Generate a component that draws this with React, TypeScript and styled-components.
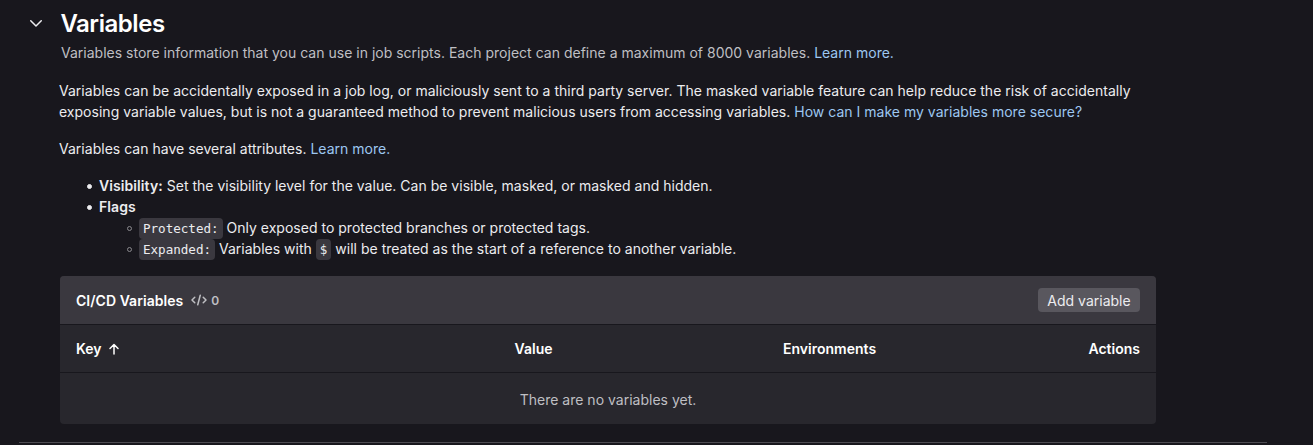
import React from "react";
import styled, { createGlobalStyle } from "styled-components";

const Global = createGlobalStyle`
  *, *::before, *::after { box-sizing: border-box; }
  body { margin: 0; background: #18171d; color: #ececef; font: 14px/21px Inter, "Noto Sans", sans-serif; letter-spacing: 0.01px; overflow: hidden; }
`;
const Page = styled.main`
  padding: 9px 46px 0 19px;
`;
const Section = styled.section`
  border-bottom: 1px solid #4c4b51;
  height: 434px;
  padding-left: 7px;
`;
const Header = styled.header`
  display: flex;
  gap: 25px;
`;
const Toggle = styled.button`
  display: flex;
  border: 0;
  padding: 6px 2px 0;
  width: 20px;
  height: 24px;
  background: none;
  color: #ececef;
`;
const Intro = styled.div`
  margin-left: -10px;
`;
const Title = styled.h2`
  margin: 0 0 0 -0.6px;
  font-size: 24px;
  line-height: 30px;
  font-weight: 600;
  letter-spacing: -0.46px;
  color: #fff;
`;
const Summary = styled.p`
  margin: 3px 0 0;
  color: #bfbfc3;
`;
const Link = styled.a`
  color: #9dc7f1;
  text-decoration: none;
`;
const Body = styled.div`
  width: 1097px;
  margin: 17px 0 0 33px;
`;
const Text = styled.p`
  margin: 0 0 16px;
  letter-spacing: 0.018px;
`;
const List = styled.ul`
  margin: 0;
  padding-left: 40px;
  list-style: none;
`;
const Item = styled.li<{ $hollow?: boolean }>`
  &::before {
    content: "";
    display: inline-block;
    width: 5px;
    height: 5px;
    margin: 0 7px 2px -12px;
    vertical-align: middle;
    border: 1px solid ${(p) => (p.$hollow ? "#89888d" : "#ececef")};
    border-radius: 50%;
    background: ${(p) => (p.$hollow ? "transparent" : "#ececef")};
  }
`;
const Strong = styled.strong`
  font-weight: 600;
  letter-spacing: 0.08px;
`;
const Code = styled.code`
  font: 12.6px/16px "DejaVu Sans Mono", "Liberation Mono", monospace;
  letter-spacing: -0.02px;
  background: #3a383f;
  border-radius: 4px;
  padding: 3px 4px;
`;
const Card = styled.div`
  margin: 17px 0 0 1px;
  border-radius: 4px;
  overflow: hidden;
  background: #28272d;
`;
const CardHeader = styled.div`
  display: flex;
  align-items: center;
  height: 48px;
  padding: 0 16px;
  background: #3a383f;
  font-weight: 600;
  letter-spacing: 0.04px;
  color: #fff;
`;
const Count = styled.span`
  display: flex;
  align-items: center;
  gap: 4px;
  margin-left: 8px;
  font-size: 12px;
  color: #bfbfc3;
`;
const AddButton = styled.button`
  margin-left: auto;
  width: 102px;
  height: 24px;
  border: 0;
  border-radius: 4px;
  padding: 1px 0 0;
  font: 14px/16px Inter, sans-serif;
  color: #ececef;
  background: #59575e;
`;
const Columns = styled.div`
  display: grid;
  grid-template-columns: 438.6px 268.4px 1fr auto;
  align-items: center;
  height: 49px;
  padding: 0 16px;
  border-top: 1px solid #18171d;
  border-bottom: 1px solid #18171d;
  font-weight: 600;
  color: #fff;
`;
const Column = styled.span`
  display: flex;
  align-items: center;
  gap: 6px;
`;
const Empty = styled.div`
  height: 51px;
  line-height: 53px;
  text-align: center;
  color: #bfbfc3;
`;

export default function App() {
  return (
    <Page>
      <Global />
      <Section>
        <Header>
          <Toggle aria-label="Collapse">
            <svg width="16" height="16" viewBox="0 0 16 16" fill="none" stroke="currentColor" strokeWidth="1.5" strokeLinecap="round" strokeLinejoin="round"><path d="M2.75 5.75 8 11l5.25-5.25" /></svg>
          </Toggle>
          <Intro>
            <Title>Variables</Title>
            <Summary>Variables store information that you can use in job scripts. Each project can define a maximum of 8000 variables. <Link>Learn more.</Link></Summary>
          </Intro>
        </Header>
        <Body>
          <Text>Variables can be accidentally exposed in a job log, or maliciously sent to a third party server. The masked variable feature can help reduce the risk of accidentally exposing variable values, but is not a guaranteed method to prevent malicious users from accessing variables. <Link>How can I make my variables more secure?</Link></Text>
          <Text>Variables can have several attributes. <Link>Learn more.</Link></Text>
          <List>
            <Item><Strong>Visibility:</Strong> Set the visibility level for the value. Can be visible, masked, or masked and hidden.</Item>
            <Item><Strong>Flags</Strong>
              <List>
                <Item $hollow><Code>Protected:</Code> Only exposed to protected branches or protected tags.</Item>
                <Item $hollow><Code>Expanded:</Code> Variables with <Code>$</Code> will be treated as the start of a reference to another variable.</Item>
              </List>
            </Item>
          </List>
          <Card>
            <CardHeader>
              CI/CD Variables
              <Count>
                <svg width="16" height="16" viewBox="0 0 16 16" fill="none" stroke="currentColor" strokeWidth="1.5" strokeLinecap="round" strokeLinejoin="round"><path d="M9.25 3.25 6.75 12.75M3.75 5.25 1 8l2.75 2.75M12.25 5.25 15 8l-2.75 2.75" /></svg>
                0
              </Count>
              <AddButton>Add variable</AddButton>
            </CardHeader>
            <Columns>
              <Column>Key
                <svg width="12" height="12" viewBox="0 0 12 12" fill="none" stroke="currentColor" strokeWidth="1.5" strokeLinecap="round" strokeLinejoin="round"><path d="M6 11V1.5M2 5.5l4-4 4 4" /></svg>
              </Column>
              <Column>Value</Column>
              <Column>Environments</Column>
              <Column>Actions</Column>
            </Columns>
            <Empty>There are no variables yet.</Empty>
          </Card>
        </Body>
      </Section>
    </Page>
  );
}
